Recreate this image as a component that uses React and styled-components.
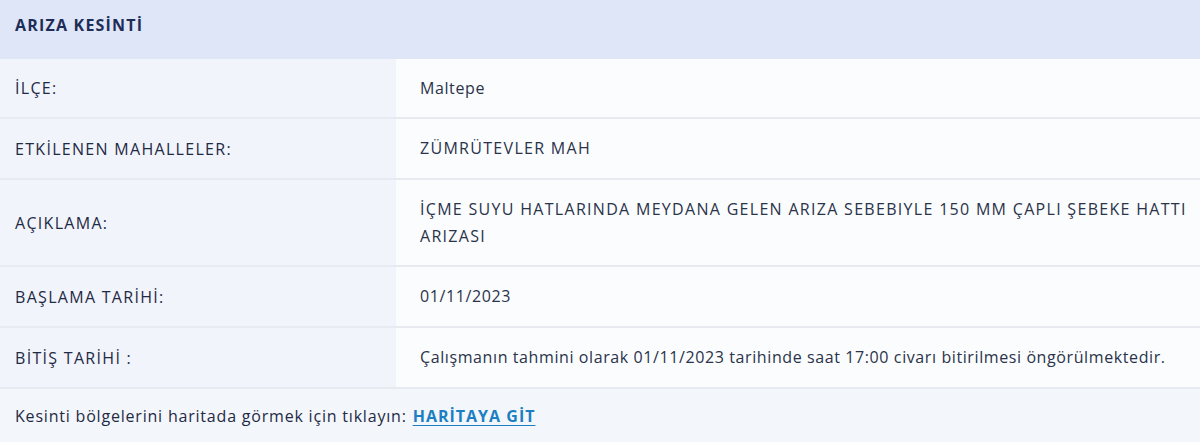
import React from 'react';
import styled, { createGlobalStyle } from 'styled-components';

const GlobalStyle = createGlobalStyle`
  html, body {
    margin: 0;
    padding: 0;
    background: #f3f6fb;
  }
  body {
    font-family: "Open Sans", Lato, sans-serif;
  }
`;

const Panel = styled.div`
  width: 1200px;
  height: 442px;
  display: flex;
  flex-direction: column;
  background: #f3f6fb;
  color: #26304a;
  font-size: 16px;
  letter-spacing: 0.6px;
`;

const Header = styled.div`
  height: 59px;
  display: flex;
  align-items: center;
  padding: 0 15px 9px;
  box-sizing: border-box;
  background: #dfe6f7;
  color: #1d2d57;
  font-weight: 700;
  font-size: 16px;
  letter-spacing: 1.2px;
`;

const Row = styled.div`
  display: grid;
  grid-template-columns: 396px 1fr;
  height: ${(props) => props.h}px;
  border-bottom: 2px solid #e7eaf0;
  box-sizing: border-box;
`;

const Label = styled.div`
  display: flex;
  align-items: center;
  padding-left: 15px;
  background: #f1f4fa;
  color: #1f2a45;
  text-transform: uppercase;
  letter-spacing: 1.3px;
`;

const Value = styled.div`
  display: flex;
  align-items: center;
  padding: 0 10px 0 24px;
  background: #fbfcfe;
  color: #2a3349;
  line-height: 27px;
  letter-spacing: ${(props) => (props.$caps ? '1.3px' : '0.6px')};
`;

const Footer = styled.div`
  flex: 1;
  display: flex;
  align-items: center;
  padding: 0 15px 0;
  color: #1f2a45;
  letter-spacing: 0.8px;
`;

const MapLink = styled.a`
  margin-left: 6px;
  color: #1b7fc1;
  font-weight: 700;
  letter-spacing: 1px;
  text-decoration: underline;
  text-underline-offset: 3px;
`;

const rows = [
  { label: 'İLÇE:', value: 'Maltepe', h: 60 },
  { label: 'ETKİLENEN MAHALLELER:', value: 'ZÜMRÜTEVLER MAH', h: 61, caps: true },
  {
    label: 'AÇIKLAMA:',
    value: 'İÇME SUYU HATLARINDA MEYDANA GELEN ARIZA SEBEBIYLE 150 MM ÇAPLI ŞEBEKE HATTI ARIZASI',
    h: 87,
    caps: true,
  },
  { label: 'BAŞLAMA TARİHİ:', value: '01/11/2023', h: 61 },
  {
    label: 'BİTİŞ TARİHİ :',
    value: 'Çalışmanın tahmini olarak 01/11/2023 tarihinde saat 17:00 civarı bitirilmesi öngörülmektedir.',
    h: 61,
  },
];

export default function App() {
  return (
    <>
      <GlobalStyle />
      <Panel>
        <Header>ARIZA KESİNTİ</Header>
        {rows.map((r) => (
          <Row key={r.label} h={r.h}>
            <Label>{r.label}</Label>
            <Value $caps={r.caps}>{r.value}</Value>
          </Row>
        ))}
        <Footer>
          Kesinti bölgelerini haritada görmek için tıklayın:
          <MapLink href="#">HARİTAYA GİT</MapLink>
        </Footer>
      </Panel>
    </>
  );
}
